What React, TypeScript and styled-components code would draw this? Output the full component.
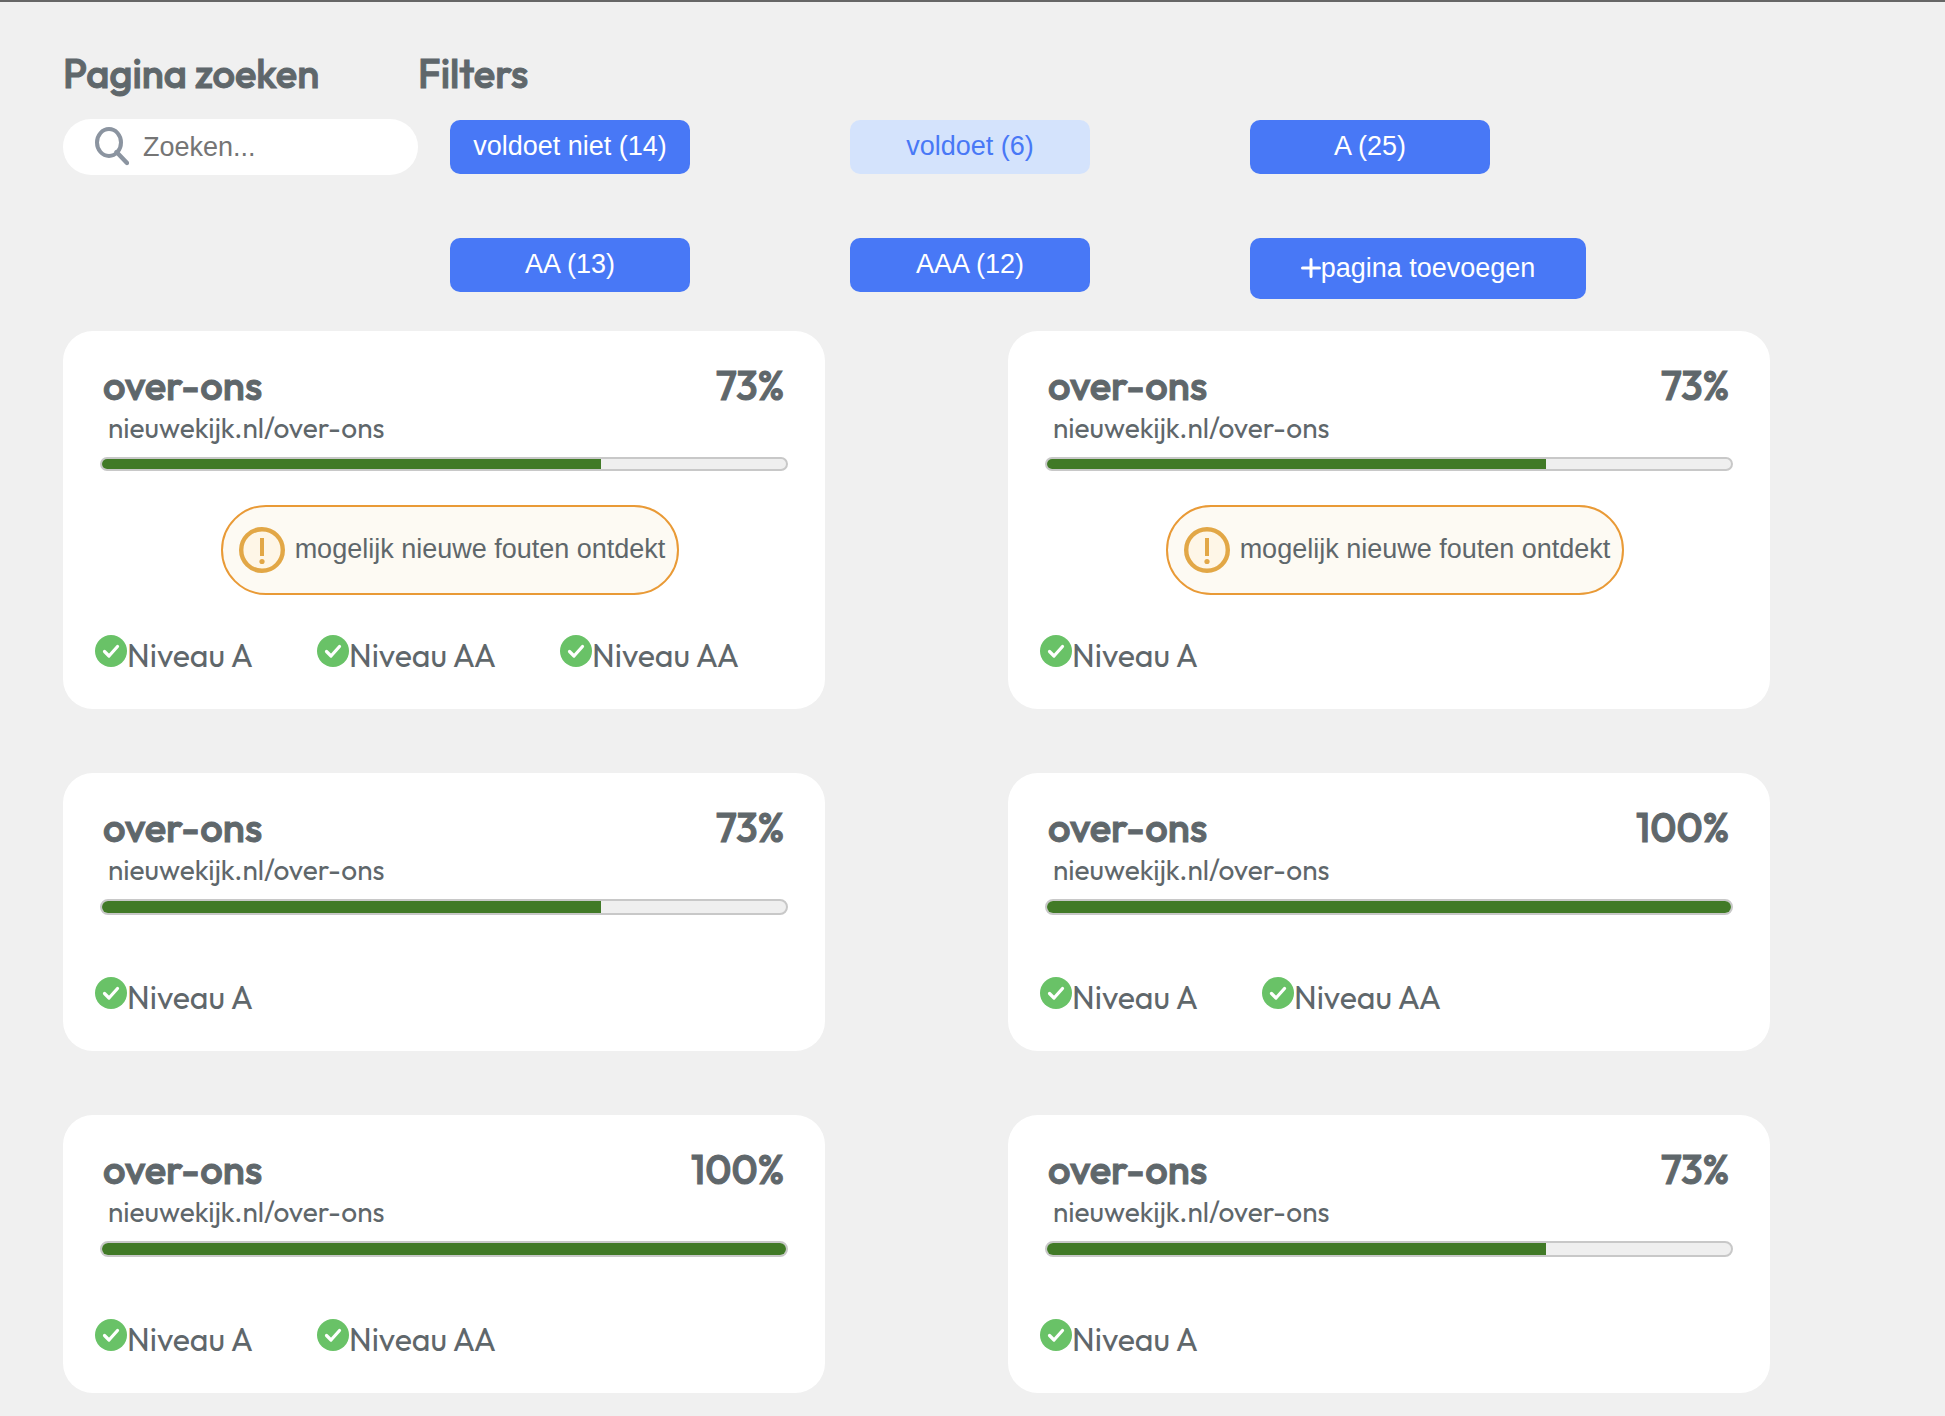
import React from "react";
import styled, { createGlobalStyle } from "styled-components";

const sans = `"Liberation Sans", Arial, sans-serif`;
const display = `Outfit, Lato, sans-serif`;
const ink = "#5f676b";
const blue = "#4878f6";

const GlobalStyle = createGlobalStyle`
  *, *::before, *::after { box-sizing: border-box; }
  body {
    margin: 0;
    background: #f0f0f0;
    color: ${ink};
    font-family: ${display};
  }
`;

const Page = styled.main`
  border-top: 2px solid #666;
  padding: 49px 175px 23px 63px;
`;

const Toolbar = styled.div`
  display: flex;
  align-items: flex-start;
`;

const SearchPanel = styled.section`
  flex: 0 0 355px;
  min-width: 0;
`;

const FilterPanel = styled.section`
  flex: 1;
`;

const Heading = styled.h2`
  margin: 0;
  font-size: 40px;
  font-weight: 500;
  line-height: 45px;
  -webkit-text-stroke: 1px currentColor;
`;

const SearchBox = styled.label`
  display: flex;
  align-items: center;
  gap: 14px;
  height: 56px;
  margin-top: 23px;
  padding: 0 32px;
  border-radius: 28px;
  background: #fff;
`;

const SearchInput = styled.input`
  flex: 1;
  min-width: 0;
  padding: 0;
  border: 0;
  outline: 0;
  background: transparent;
  color: ${ink};
  font: 27px/32px ${sans};
  &::placeholder { color: #757575; opacity: 1; }
`;

const FilterGrid = styled.div`
  display: grid;
  grid-template-columns: repeat(3, 336px);
  gap: 64px;
  align-items: start;
  justify-items: start;
  margin: 24px 0 0 32px;
`;

const FilterButton = styled.button<{ $off?: boolean; $wide?: boolean }>`
  display: flex;
  align-items: center;
  justify-content: center;
  width: ${(p) => (p.$wide ? 336 : 240)}px;
  height: ${(p) => (p.$wide ? 61 : 54)}px;
  padding: 0 0 2px;
  border: 0;
  border-radius: 10px;
  background: ${(p) => (p.$off ? "#d4e3fc" : blue)};
  color: ${(p) => (p.$off ? blue : "#fff")};
  font: 27px/32px ${sans};
  white-space: nowrap;
  cursor: pointer;
`;

const CardGrid = styled.div`
  display: grid;
  grid-template-columns: repeat(2, 1fr);
  gap: 64px 183px;
  margin-top: 32px;
`;

const Card = styled.article`
  padding: 32px 37px 34px;
  border-radius: 30px;
  background: #fff;
`;

const CardHeader = styled.header`
  display: flex;
  justify-content: space-between;
  padding: 0 4px 2px 3px;
`;

const Address = styled.a`
  display: block;
  padding-left: 8px;
  color: inherit;
  font-size: 28px;
  line-height: 36px;
  text-decoration: none;
`;

const Track = styled.div<{ $slim: boolean }>`
  height: ${(p) => (p.$slim ? 14 : 16)}px;
  margin-top: 11px;
  border: 2px solid #c8c8c8;
  border-radius: 8px;
  background: #efefef;
  overflow: hidden;
`;

const Fill = styled.div`
  height: 100%;
  background: #417a27;
`;

const AlertRow = styled.div`
  display: flex;
  justify-content: center;
  padding: 34px 0 0 12px;
`;

const Alert = styled.div`
  display: flex;
  align-items: center;
  gap: 10px;
  height: 90px;
  padding: 0 12px 0 16px;
  border: 2px solid #e99a36;
  border-radius: 45px;
  background: #fdfaf3;
  font: 27px/32px ${sans};
  white-space: nowrap;
`;

const AlertText = styled.span`
  padding-bottom: 2px;
`;

const Levels = styled.ul<{ $afterAlert: boolean }>`
  display: flex;
  gap: 64px;
  margin: ${(p) => (p.$afterAlert ? 40 : 62)}px 0 0 -5px;
  padding: 0;
  list-style: none;
`;

const Level = styled.li`
  display: flex;
  align-items: flex-start;
  font-size: 32px;
  line-height: 40px;
  white-space: nowrap;
`;

const SearchIcon = () => (
  <svg width="34" height="40" viewBox="0 0 34 40" fill="none" stroke="#8b94a0" strokeLinecap="round" aria-hidden="true">
    <ellipse cx="14" cy="15.5" rx="12" ry="13.5" strokeWidth="4" />
    <path d="M21.5 25 32 36" strokeWidth="4.4" />
  </svg>
);

const PlusIcon = () => (
  <svg width="20" height="20" viewBox="0 0 20 20" stroke="#fff" strokeWidth="3" strokeLinecap="round" aria-hidden="true">
    <path d="M10 1.5v17M1.5 10h17" />
  </svg>
);

const WarningIcon = () => (
  <svg width="46" height="46" viewBox="0 0 46 46" aria-hidden="true">
    <circle cx="23" cy="23" r="20.8" fill="#fef6e7" stroke="#e2a746" strokeWidth="4.4" />
    <path d="M23 11v18" stroke="#e2a746" strokeWidth="4" />
    <circle cx="23" cy="34.5" r="2.6" fill="#e2a746" />
  </svg>
);

const CheckIcon = () => (
  <svg width="32" height="32" viewBox="0 0 32 32" aria-hidden="true">
    <circle cx="16" cy="16" r="16" fill="#69c267" />
    <path d="M9.5 16.5 14 21 22.5 11.5" fill="none" stroke="#fff" strokeWidth="3.2" strokeLinecap="round" strokeLinejoin="round" />
  </svg>
);

type PageResult = { score: number; alert?: boolean; levels: string[] };

const filters = [
  { label: "voldoet niet (14)" },
  { label: "voldoet (6)", off: true },
  { label: "A (25)" },
  { label: "AA (13)" },
  { label: "AAA (12)" },
];

const pages: PageResult[] = [
  { score: 73, alert: true, levels: ["Niveau A", "Niveau AA", "Niveau AA"] },
  { score: 73, alert: true, levels: ["Niveau A"] },
  { score: 73, levels: ["Niveau A"] },
  { score: 100, levels: ["Niveau A", "Niveau AA"] },
  { score: 100, levels: ["Niveau A", "Niveau AA"] },
  { score: 73, levels: ["Niveau A"] },
];

const PageCard = ({ score, alert = false, levels }: PageResult) => (
  <Card>
    <CardHeader>
      <Heading>over-ons</Heading>
      <Heading as="strong">{score}%</Heading>
    </CardHeader>
    <Address href="#over-ons">nieuwekijk.nl/over-ons</Address>
    <Track $slim={alert} role="progressbar" aria-label="Score" aria-valuenow={score} aria-valuemin={0} aria-valuemax={100}>
      <Fill style={{ width: `${score}%` }} />
    </Track>
    {alert && (
      <AlertRow>
        <Alert>
          <WarningIcon />
          <AlertText>mogelijk nieuwe fouten ontdekt</AlertText>
        </Alert>
      </AlertRow>
    )}
    <Levels $afterAlert={alert}>
      {levels.map((level, i) => (
        <Level key={i}>
          <CheckIcon />
          <span>{level}</span>
        </Level>
      ))}
    </Levels>
  </Card>
);

export default function App() {
  return (
    <>
      <GlobalStyle />
      <Page>
        <Toolbar>
          <SearchPanel>
            <Heading>Pagina zoeken</Heading>
            <SearchBox>
              <SearchIcon />
              <SearchInput type="text" placeholder="Zoeken..." aria-label="Pagina zoeken" />
            </SearchBox>
          </SearchPanel>
          <FilterPanel>
            <Heading>Filters</Heading>
            <FilterGrid>
              {filters.map((f) => (
                <FilterButton key={f.label} type="button" $off={f.off}>
                  {f.label}
                </FilterButton>
              ))}
              <FilterButton type="button" $wide>
                <PlusIcon />
                pagina toevoegen
              </FilterButton>
            </FilterGrid>
          </FilterPanel>
        </Toolbar>
        <CardGrid>
          {pages.map((page, i) => (
            <PageCard key={i} {...page} />
          ))}
        </CardGrid>
      </Page>
    </>
  );
}
